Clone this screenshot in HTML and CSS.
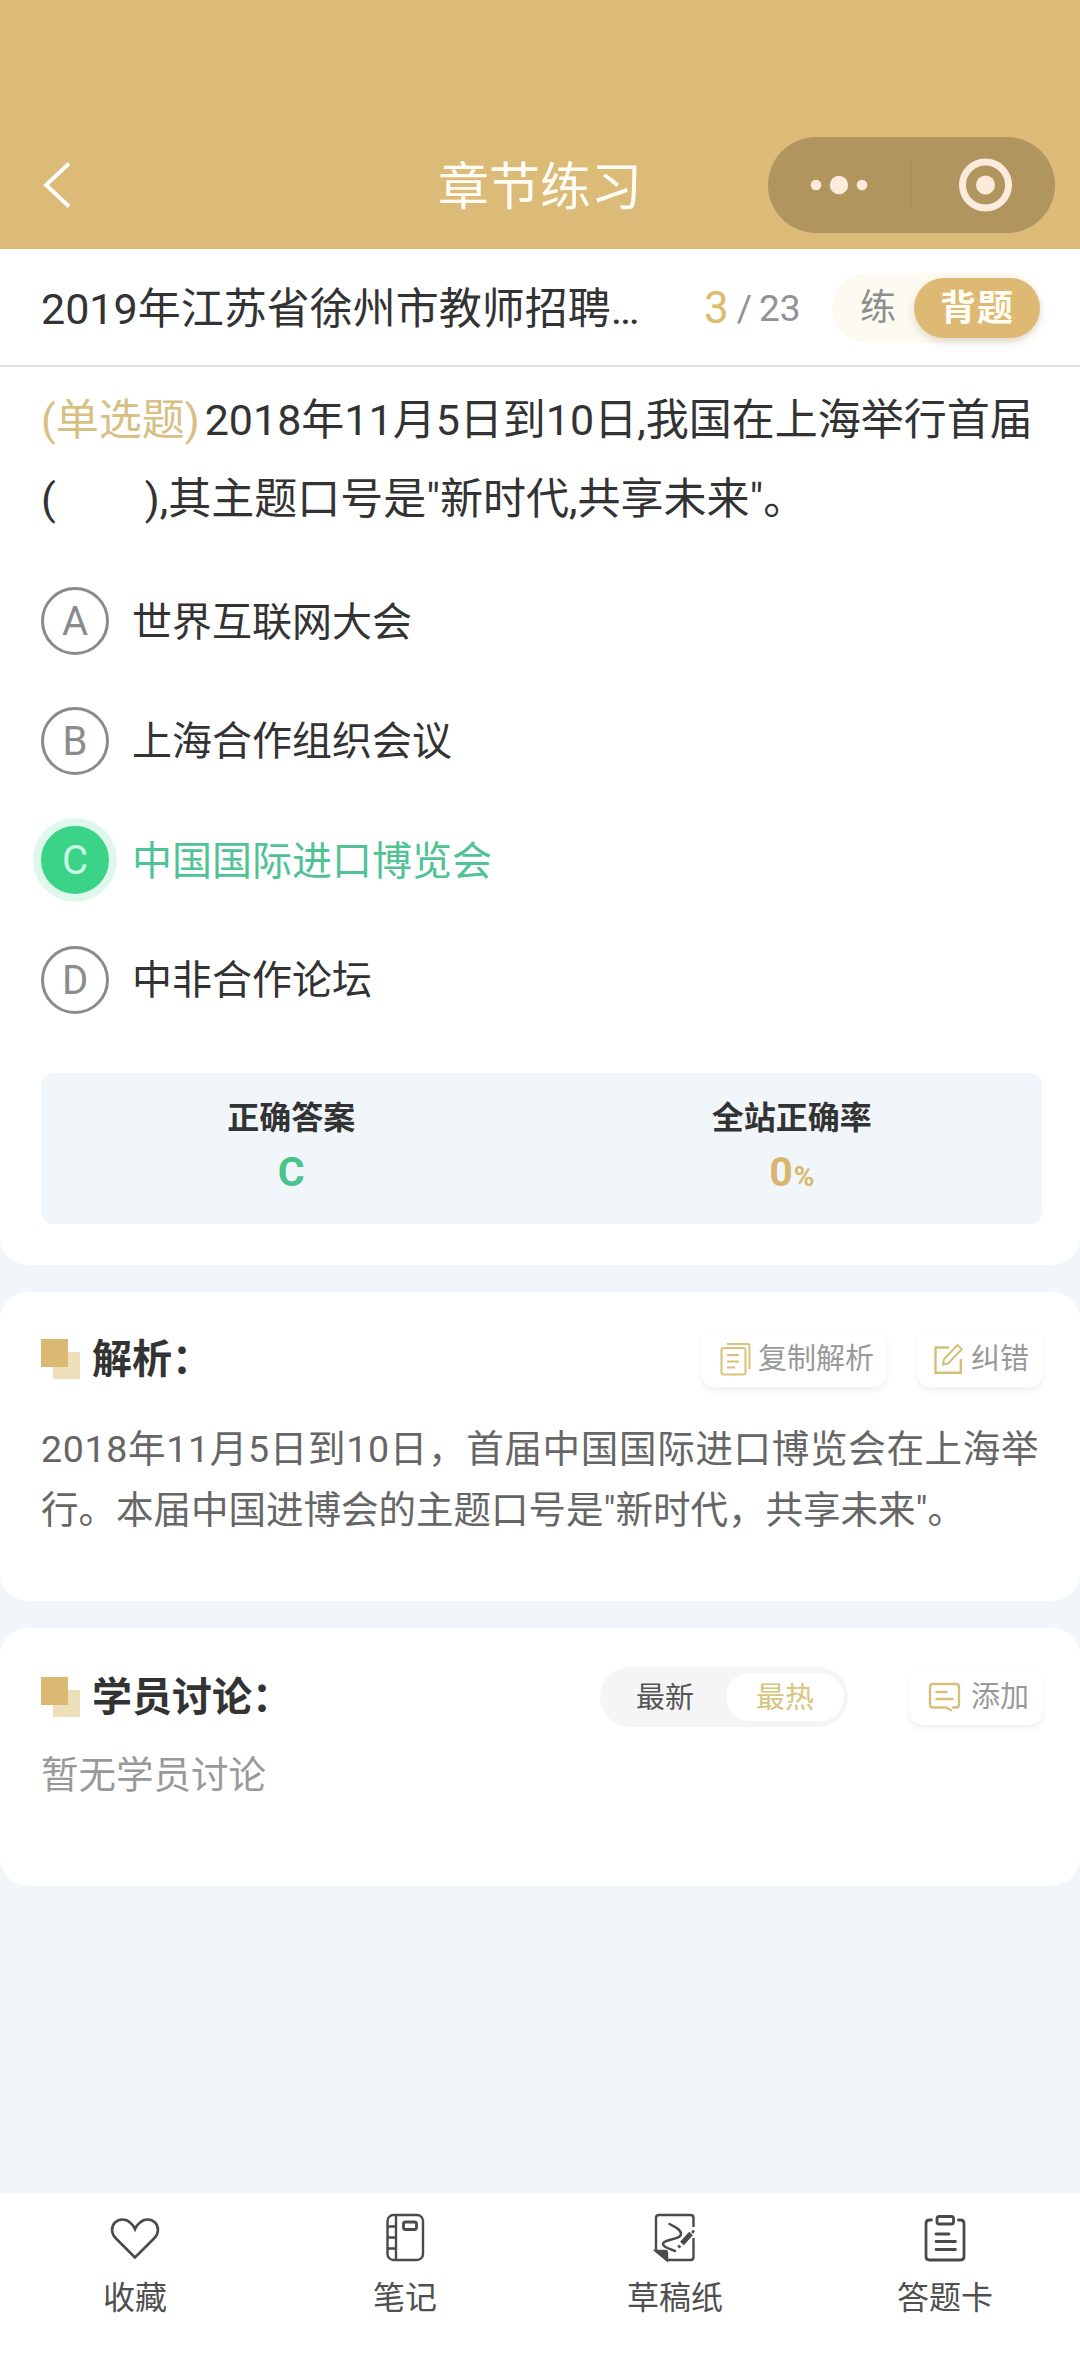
FILE: index.html
```html
<!DOCTYPE html>
<html lang="zh-CN">
<head>
<meta charset="utf-8">
<title>章节练习</title>
<link rel="stylesheet" href="styles.css">
</head>
<body>
<div class="app">
  <header class="navbar">
    <svg class="back" width="30" height="50" viewBox="0 0 30 50"><path d="M27 3.500 4 25 27 46.500" fill="none" stroke="#fff" stroke-width="3.800"/></svg>
    <h1 class="navbar-title">章节练习</h1>
    <div class="capsule">
      <svg width="287" height="96" viewBox="0 0 287 96">
        <path d="M143.500 24v48" stroke="#a98f5a" stroke-width="1"/>
        <g fill="#fcebdd"><circle cx="48" cy="48" r="5.300"/><circle cx="71" cy="48" r="9.200"/><circle cx="94" cy="48" r="5.300"/><circle cx="217.500" cy="48" r="9.500"/></g>
        <circle cx="217.500" cy="48" r="23" fill="none" stroke="#fcebdd" stroke-width="7"/>
      </svg>
    </div>
  </header>

  <div class="paper-bar">
    <div class="paper-name">2019年江苏省徐州市教师招聘…</div>
    <div class="progress"><span class="current">3</span><span class="slash">/</span><span>23</span></div>
    <div class="mode"><span class="mode-item">练</span><span class="mode-item active">背题</span></div>
  </div>

  <section class="card question-card">
    <p class="question"><span class="kind">(单选题)</span>2018年11月5日到10日,我国在上海举行首届<br>(<span class="blank"></span>),其主题口号是"新时代,共享未来"。</p>
    <ul class="options">
      <li class="option"><span class="letter">A</span><span class="option-text">世界互联网大会</span></li>
      <li class="option"><span class="letter">B</span><span class="option-text">上海合作组织会议</span></li>
      <li class="option correct"><span class="letter">C</span><span class="option-text">中国国际进口博览会</span></li>
      <li class="option"><span class="letter">D</span><span class="option-text">中非合作论坛</span></li>
    </ul>
    <div class="result">
      <div class="result-col"><span class="result-label">正确答案</span><span class="result-value green">C</span></div>
      <div class="result-col"><span class="result-label">全站正确率</span><span class="result-value gold">0<small>%</small></span></div>
    </div>
  </section>

  <section class="card analysis-card">
    <div class="card-head">
      <i class="mark"></i>
      <h2>解析：</h2>
      <button class="chip copy">
        <svg width="31" height="34" viewBox="0 0 31 34" fill="none" stroke="#d9c27c" stroke-width="2"><rect x="1.500" y="6" width="24" height="26.500" rx="2"/><path d="M7 2h20.500q2 0 2 2v23M7 13h12M7 19.500h12M7 25.500h8"/></svg>复制解析
      </button>
      <button class="chip fix">
        <svg width="31" height="32" viewBox="0 0 31 32" fill="none" stroke="#d4bf7c" stroke-width="2.400"><path d="M16 4.500H2.500v25.300h25.300V16"/><path d="M24.500 2l4.300 4.300L15 20.500l-5 1 .8-5z" stroke-width="2"/></svg>纠错
      </button>
    </div>
    <p class="analysis"><span class="full-line">2018年11月5日到10日，首届中国国际进口博览会在上海举</span><br>行。本届中国进博会的主题口号是"新时代，共享未来"。</p>
  </section>

  <section class="card talk-card">
    <div class="card-head">
      <i class="mark"></i>
      <h2>学员讨论：</h2>
      <div class="sort"><span class="sort-item">最新</span><span class="sort-item active">最热</span></div>
      <button class="chip add">
        <svg width="33" height="30" viewBox="0 0 33 30" fill="none" stroke="#d4bf7c" stroke-width="2.400" stroke-linecap="round"><path d="M18 25.500H5q-3 0-3-3V5q0-3 3-3h23q3 0 3 3v17.500q0 3-3 3h-3M18 25.500l5 2.700M8.500 10h10M8.500 17h16"/></svg>添加
      </button>
    </div>
    <p class="empty">暂无学员讨论</p>
  </section>

  <nav class="tabbar">
    <a class="tab">
      <svg width="52" height="52" viewBox="0 0 52 52" fill="none" stroke="#4a4a4a" stroke-width="2.600"><path d="M26 46.500 6.500 27C2 22.500 2 15.500 6 11.500s11-4 15 0C23.500 13.500 25 15.500 26 18c1-2.500 2.500-4.500 5-6.500 4-4 11-4 15 0s4 11-.5 15.500z"/></svg>收藏
    </a>
    <a class="tab">
      <svg width="52" height="52" viewBox="0 0 52 52" fill="none" stroke="#4a4a4a" stroke-width="2.400"><rect x="8.500" y="4" width="35.500" height="45" rx="6"/><path d="M17 4v45M8.500 15.500H17M8.500 26.500H17M8.500 37.500H17"/><rect x="24.500" y="11" width="13" height="7.500" rx="2" stroke-width="2.800"/></svg>笔记
    </a>
    <a class="tab">
      <svg width="52" height="52" viewBox="0 0 52 52" fill="none" stroke="#4a4a4a" stroke-width="2.400"><path d="M44.500 16V7q0-3-3-3H10Q7 4 7 7v33l11 9h23.500q3 0 3-3V27"/><path d="M7 40h9q2 0 2 2v7z" fill="#4a4a4a"/><path d="M20.500 13c7 3.500 11.500 6 11.500 10 0 6-18 5-18 10 0 2.500 5 4.500 12 7" stroke-linecap="round"/><path d="M33 32.500 42 22.500" stroke-width="5"/><path d="M29.500 36.500l1.500-2M43 20l2 1.500" stroke-width="3"/></svg>草稿纸
    </a>
    <a class="tab">
      <svg width="52" height="52" viewBox="0 0 52 52" fill="none" stroke="#4a4a4a" stroke-width="2.800" stroke-linecap="round"><path d="M12.500 9H10.500Q7 9 7 12.500v33Q7 49 10.500 49h31q3.500 0 3.500-3.500v-33Q45 9 41.500 9h-2"/><rect x="18" y="5.500" width="16.500" height="7.500" rx="2"/><path d="M17 23h13M17 30.500h19.500M17 38.500h19.500"/></svg>答题卡
    </a>
  </nav>
</div>
</body>
</html>
```
FILE: styles.css
```css
* { box-sizing: border-box; margin: 0; padding: 0; }

body {
  width: 1080px;
  background: #f1f6fa;
  color: #333;
  font-family: Roboto, "Noto Sans CJK SC", sans-serif;
}

svg { display: block; flex: none; }

.app { display: flex; flex-direction: column; height: 2376px; }

/* top navigation */
.navbar {
  display: grid;
  grid-template-columns: 312px 456px 312px;
  align-items: center;
  height: 249px;
  padding-top: 120px;
  background: #dcba78;
}
.back { margin-left: 42px; }
.navbar-title {
  padding-top: 7px;
  text-align: center;
  color: #fffdf5;
  font-size: 51px;
  font-weight: 400;
  line-height: 60px;
}
.capsule { width: 287px; height: 96px; border-radius: 48px; background: #b0955e; }

/* paper name, progress and mode switch */
.paper-bar {
  display: flex;
  align-items: center;
  height: 118px;
  padding: 2px 0 0 41px;
  background: #fff;
  border-bottom: 2px solid #e2e2e4;
}
.paper-name { width: 663px; padding-top: 2px; font-size: 43px; line-height: 60px; white-space: nowrap; }
.progress {
  display: flex;
  align-items: center;
  width: 128px;
  color: #929296;
  font-size: 37px;
}
.progress .current { color: #dcba6e; font-size: 44px; line-height: 50px; }
.progress .slash { margin: 0 7px 0 8px; }
.mode {
  display: flex;
  align-items: center;
  width: 210px;
  height: 70px;
  padding-right: 2px;
  border-radius: 35px;
  background: #fdfaf1;
}
.mode-item { width: 82px; padding-left: 28px; color: #8e8e8c; font-size: 36px; line-height: 62px; }
.mode-item.active {
  width: 126px;
  height: 60px;
  padding: 0;
  border-radius: 30px;
  background: #ddb973;
  box-shadow: 0 4px 8px rgba(120, 100, 60, .2);
  color: #fffdf4;
  font-weight: 700;
  text-align: center;
  letter-spacing: 1px;
}

/* cards */
.card { background: #fff; border-radius: 28px; padding: 0 38px 0 41px; }

.question-card { height: 898px; border-radius: 0 0 28px 28px; padding-top: 14px; }
.question { font-size: 43px; line-height: 79px; white-space: nowrap; }
.kind { margin-right: 5px; color: #d8c084; }
.blank { display: inline-block; width: 89px; }

.options { list-style: none; margin-top: 48px; }
.option { display: flex; align-items: center; gap: 23px; height: 68px; margin-bottom: 51.5px; font-size: 40px; }
.option-text { padding-bottom: 5px; }
.letter {
  width: 68px;
  height: 68px;
  border: 3px solid #8b8b8f;
  border-radius: 50%;
  color: #8b8b8f;
  line-height: 63px;
  text-align: center;
}
.option.correct { color: #4fc394; }
.correct .letter {
  border-color: #3ad388;
  background: #3ad388;
  box-shadow: 0 0 0 8px #dff8ec;
  color: #c9fbe2;
}

.result {
  display: grid;
  grid-template-columns: 1fr 1fr;
  height: 151px;
  margin-top: 59px;
  border-radius: 12px;
  background: #f0f6fa;
}
.result-col { display: flex; flex-direction: column; align-items: center; padding-top: 19px; }
.result-label { font-size: 32px; font-weight: 700; line-height: 52px; }
.result-value { font-size: 41px; font-weight: 700; line-height: 56px; }
.result-value small { margin-left: 1px; font-size: 28px; font-weight: 700; }
.green { color: #4ac48c; }
.gold { color: #d9b66f; }

.analysis-card { height: 309px; margin-top: 27px; padding-top: 36px; }
.talk-card { height: 258px; margin-top: 27px; padding-top: 38px; }

.card-head { display: flex; align-items: center; height: 62px; }
.mark {
  width: 39px;
  height: 40px;
  background:
    linear-gradient(#dcb972, #dcb972) 0 0 / 27px 28px no-repeat,
    linear-gradient(#eddfb9, #eddfb9) 12px 13px / 27px 27px no-repeat;
}
h2 { margin: 0 auto 0 12px; padding-top: 2px; font-size: 40px; line-height: 60px; white-space: nowrap; }

.chip {
  display: flex;
  align-items: center;
  height: 56px;
  border: 0;
  border-radius: 12px;
  background: #fff;
  box-shadow: 0 3px 6px rgba(0, 0, 0, .07);
  color: #999;
  font: 29px/56px Roboto, "Noto Sans CJK SC", sans-serif;
}
.copy { width: 184px; padding-left: 18px; gap: 7px; }
.fix { width: 124px; margin-left: 32px; padding-left: 15px; gap: 7px; }
.add { width: 132px; margin-left: 62px; padding-left: 18px; gap: 10px; }

.analysis { margin-top: 29px; color: #666; font-size: 37.5px; line-height: 61px; white-space: nowrap; }
.full-line { letter-spacing: .7px; }
.empty { margin-top: 18px; color: #999; font-size: 37.5px; line-height: 58px; }

.sort {
  display: flex;
  align-items: center;
  width: 248px;
  height: 60px;
  padding: 0 4px;
  border-radius: 30px;
  background: #f5f5f5;
}
.sort-item { width: 122px; height: 48px; padding-left: 32px; color: #555; font-size: 29px; line-height: 50px; }
.sort-item.active {
  width: 118px;
  padding: 0;
  border-radius: 24px;
  background: #fff;
  color: #d8c47e;
  text-align: center;
}

/* bottom tabs */
.tabbar {
  display: grid;
  grid-template-columns: repeat(4, 1fr);
  height: 183px;
  margin-top: auto;
  padding-top: 18px;
  background: #fff;
}
.tab {
  display: flex;
  flex-direction: column;
  align-items: center;
  gap: 10px;
  color: #4f4f4f;
  font-size: 32px;
  line-height: 50px;
}
```
